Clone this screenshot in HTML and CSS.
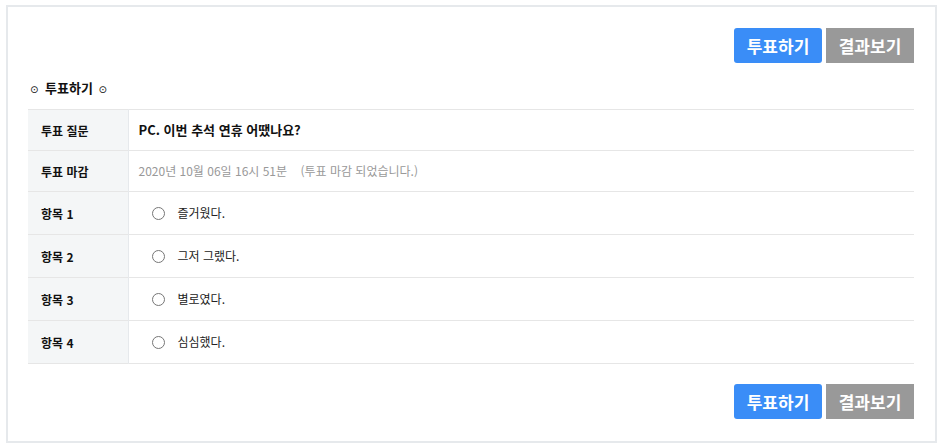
FILE: index.html
```html
<!DOCTYPE html>
<html lang="ko">
<head>
    <meta charset="UTF-8">
    <title>투표하기</title>
    <link rel="stylesheet" href="styles.css">
</head>
<body>

    <!-- Poll Box -->
    <div class="poll-box">
        <div class="poll-buttons">
            <button class="btn-vote">투표하기</button>
            <button class="btn-result">결과보기</button>
        </div>

        <h3 class="poll-title"><span class="dot">⊙</span> 투표하기 <span class="dot">⊙</span></h3>

        <table class="poll-table">
            <tr class="row-info">
                <th>투표 질문</th>
                <td class="question">PC. 이번 추석 연휴 어땠나요?</td>
            </tr>
            <tr class="row-info">
                <th>투표 마감</th>
                <td class="deadline">2020년 10월 06일 16시 51분 <span class="closed">(투표 마감 되었습니다.)</span></td>
            </tr>
            <tr class="row-item">
                <th>항목 1</th>
                <td><label><input type="radio" name="poll"> 즐거웠다.</label></td>
            </tr>
            <tr class="row-item">
                <th>항목 2</th>
                <td><label><input type="radio" name="poll"> 그저 그랬다.</label></td>
            </tr>
            <tr class="row-item">
                <th>항목 3</th>
                <td><label><input type="radio" name="poll"> 별로였다.</label></td>
            </tr>
            <tr class="row-item">
                <th>항목 4</th>
                <td><label><input type="radio" name="poll"> 심심했다.</label></td>
            </tr>
        </table>

        <div class="poll-buttons bottom">
            <button class="btn-vote">투표하기</button>
            <button class="btn-result">결과보기</button>
        </div>
    </div>

</body>
</html>
```

FILE: styles.css
```css
body {
    font-family: "Noto Sans CJK KR", "Noto Sans", sans-serif;
    margin: 0;
    padding: 0;
    color: #222;
}

/* Poll Box */
.poll-box {
    margin: 5px 6px;
    border: 2px solid #e6e9ec;
    padding: 21px 21px 22px 20px;
    box-sizing: border-box;
    width: 931px;
}

.poll-buttons {
    display: flex;
    justify-content: flex-end;
    gap: 4px;
}

.poll-buttons.bottom {
    margin-top: 20px;
}

.poll-buttons button {
    height: 35px;
    width: 88px;
    border: none;
    color: white;
    font-family: "Noto Sans CJK KR", sans-serif;
    font-size: 17px;
    font-weight: bold;
    padding: 0;
    cursor: pointer;
}

.btn-vote {
    background-color: #3a8df7;
    border-radius: 3px;
}

.btn-result {
    background-color: #999999;
}

/* Title */
.poll-title {
    margin: 15px 0 9px 2px;
    font-size: 13px;
    line-height: 20px;
    font-weight: bold;
    color: #111;
}

.poll-title .dot {
    font-family: "DejaVu Sans", sans-serif;
    font-weight: normal;
    font-size: 10px;
    margin: 0 3px 0 0;
}

.poll-title .dot:last-child {
    margin: 0 0 0 2px;
}

/* Table */
.poll-table {
    width: 100%;
    border-collapse: collapse;
    font-size: 12px;
}

.poll-table tr {
    border-top: 1px solid #e6e6e6;
    border-bottom: 1px solid #e6e6e6;
}

.poll-table th {
    width: 100px;
    background-color: #f4f6f7;
    border-right: 1px solid #e6e9ec;
    text-align: left;
    font-weight: bold;
    padding: 0 0 0 13px;
    box-sizing: border-box;
    color: #111;
}

.poll-table td {
    padding: 0 0 0 10px;
    line-height: 16px;
}

.row-info th,
.row-info td {
    height: 40px;
}

.row-item th,
.row-item td {
    height: 42px;
}

.question {
    font-weight: bold;
    font-size: 13px;
    color: #111;
}

.deadline {
    color: #999;
}

.deadline .closed {
    margin-left: 10px;
}

.row-item label {
    display: flex;
    align-items: center;
    padding-left: 13px;
    color: #222;
}

.row-item input {
    width: 13px;
    height: 13px;
    margin: 0 13px 0 0;
}
```
